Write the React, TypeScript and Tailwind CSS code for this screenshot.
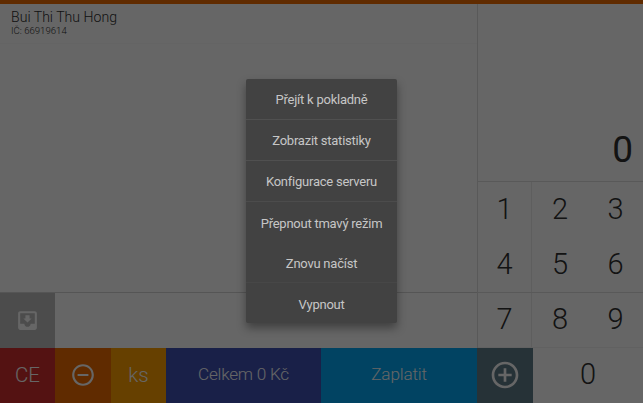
import { MdAddCircleOutline, MdMoveToInbox, MdRemoveCircleOutline } from "react-icons/md";

const menuItems = [
  { label: "Přejít k pokladně", look: "h-[41px] border-b border-[#505050] pt-0.5" },
  { label: "Zobrazit statistiky", look: "h-[41px] border-b border-[#505050] pt-0.5" },
  { label: "Konfigurace serveru", look: "h-[41px] border-b border-[#4c4c4c] pt-0.5" },
  { label: "Přepnout tmavý režim", look: "h-[41px] pt-0.5" },
  { label: "Znovu načíst", look: "h-10 border-b border-[#474747] pt-[3px]" },
  { label: "Vypnout", look: "h-10 pt-[3px]" },
];

const keyRows = [
  ["1", "2", "3"],
  ["4", "5", "6"],
  ["7", "8", "9"],
];

function Keypad() {
  return (
    <div className="border-t border-[#dedede]">
      {keyRows.map((row, r) => (
        <div
          key={row[0]}
          className={
            "grid grid-cols-[54px_56px_55px] text-[29px] font-light text-[#303030] " +
            (r === 2 ? "h-14 border-y border-t-[#dedede] border-b-[#f2f2f2]" : "h-[55px]")
          }
        >
          {row.map((k, i) => (
            <button key={k} className={i === 0 ? "border-r border-[#eaeaea]" : ""}>
              {k}
            </button>
          ))}
        </div>
      ))}
    </div>
  );
}

function Menu() {
  return (
    <div className="w-[151px] rounded-[2px] bg-[#424242] shadow-[0_5px_10px_rgba(0,0,0,0.38)]">
      {menuItems.map(({ label, look }) => (
        <button
          key={label}
          className={"flex w-full items-center justify-center text-[13px] tracking-[-0.24px] text-[#c6c6c6] " + look}
        >
          {label}
        </button>
      ))}
    </div>
  );
}

export default function App() {
  return (
    <div className="relative flex h-[403px] w-[643px] flex-col overflow-hidden bg-white font-['Roboto',sans-serif]">
      <div className="h-1 shrink-0 bg-[#ef6c00]" />
      <div className="flex h-[344px] shrink-0">
        <main className="flex w-[478px] flex-col border-r border-[#dedede]">
          <header className="h-10 border-b border-[#fafafa] pt-[5px] pl-[11px] text-[#303030]">
            <div className="text-[14.1px] leading-[17px] font-light">Bui Thi Thu Hong</div>
            <div className="text-[9.6px] leading-[10px] font-light">IČ: 66919614</div>
          </header>
          <div className="h-[248px]" />
          <div className="h-14 border-t border-[#d4d4d4]">
            <button className="flex h-full w-[55px] items-center justify-center bg-[#bdbdbd] pb-px text-white">
              <MdMoveToInbox size={25} />
            </button>
          </div>
        </main>
        <aside className="flex w-[165px] flex-col">
          <div className="flex h-[177px] items-end justify-end pr-[10px] pb-[9px] text-[37px] leading-[44px] text-[#303030]">0</div>
          <Keypad />
        </aside>
      </div>
      <footer className="grid h-[55px] grid-cols-[55px_56px_55px_155px_156px_56px_110px] font-light text-white">
        <button className="bg-[#d32f2f] pb-px text-[20.5px]">CE</button>
        <button className="flex items-center justify-center bg-[#ef6c00] pb-px">
          <MdRemoveCircleOutline size={26} />
        </button>
        <button className="bg-[#ffa000] pb-px text-[20.5px]">ks</button>
        <button className="bg-[#3f51b5] pb-px text-[17.2px] tracking-[-0.25px]">Celkem 0 Kč</button>
        <button className="bg-[#03a9f4] pb-px text-[17.2px] tracking-[-0.2px]">Zaplatit</button>
        <button className="flex items-center justify-center bg-[#607d8b] pb-px">
          <MdAddCircleOutline size={32} />
        </button>
        <button className="pb-px text-[29px] text-[#303030]">0</button>
      </footer>
      <div className="absolute inset-0 flex items-start justify-center bg-black/60 pt-[79px]">
        <Menu />
      </div>
    </div>
  );
}
